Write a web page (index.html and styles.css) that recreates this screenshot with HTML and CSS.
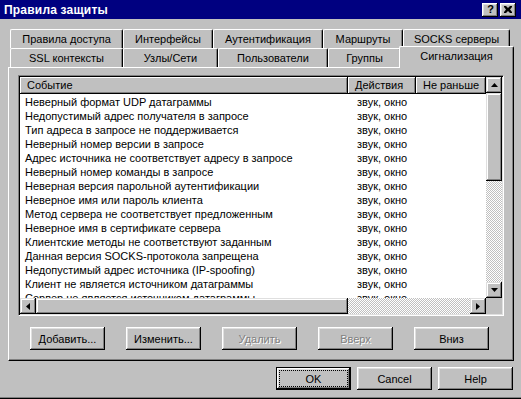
FILE: index.html
```html
<!DOCTYPE html>
<html lang="ru">
<head>
<meta charset="utf-8">
<title>Правила защиты</title>
<link rel="stylesheet" href="styles.css">
</head>
<body>
<div class="window">
  <div class="titlebar">
    <span class="title">Правила защиты</span>
    <div class="tbtns">
      <span class="tbtn help">?</span>
      <span class="tbtn close"><svg width="8" height="7" viewBox="0 0 8 7"><path d="M0 0h2l2 2 2-2h2v1l-2 2.5 2 2.5v1h-2l-2-2-2 2h-2v-1l2-2.5-2-2.5z" fill="#000"/></svg></span>
    </div>
  </div>

  <div class="tabs">
    <div class="tabrow">
      <div class="tab w113">Правила доступа</div>
      <div class="tab w90">Интерфейсы</div>
      <div class="tab w110">Аутентификация</div>
      <div class="tab w80">Маршруты</div>
      <div class="tab w107">SOCKS серверы</div>
    </div>
    <div class="tabrow">
      <div class="tab w113">SSL контексты</div>
      <div class="tab w95">Узлы/Сети</div>
      <div class="tab w110">Пользователи</div>
      <div class="tab w73">Группы</div>
      <div class="tab sel">Сигнализация</div>
    </div>
  </div>

  <div class="panel">
    <div class="list">
      <div class="view">
        <div class="header">
          <div class="hcol c1">Событие</div>
          <div class="hcol c2">Действия</div>
          <div class="hcol c3">Не раньше</div>
        </div>
        <div class="rows">
          <div class="row"><span class="c1">Неверный формат UDP датаграммы</span><span class="c2">звук, окно</span><span class="c3"></span></div>
          <div class="row"><span class="c1">Недопустимый адрес получателя в запросе</span><span class="c2">звук, окно</span><span class="c3"></span></div>
          <div class="row"><span class="c1">Тип адреса в запросе не поддерживается</span><span class="c2">звук, окно</span><span class="c3"></span></div>
          <div class="row"><span class="c1">Неверный номер версии в запросе</span><span class="c2">звук, окно</span><span class="c3"></span></div>
          <div class="row"><span class="c1">Адрес источника не соответствует адресу в запросе</span><span class="c2">звук, окно</span><span class="c3"></span></div>
          <div class="row"><span class="c1">Неверный номер команды в запросе</span><span class="c2">звук, окно</span><span class="c3"></span></div>
          <div class="row"><span class="c1">Неверная версия парольной аутентификации</span><span class="c2">звук, окно</span><span class="c3"></span></div>
          <div class="row"><span class="c1">Неверное имя или пароль клиента</span><span class="c2">звук, окно</span><span class="c3"></span></div>
          <div class="row"><span class="c1">Метод сервера не соответствует предложенным</span><span class="c2">звук, окно</span><span class="c3"></span></div>
          <div class="row"><span class="c1">Неверное имя в сертификате сервера</span><span class="c2">звук, окно</span><span class="c3"></span></div>
          <div class="row"><span class="c1">Клиентские методы не соответствуют заданным</span><span class="c2">звук, окно</span><span class="c3"></span></div>
          <div class="row"><span class="c1">Данная версия SOCKS-протокола запрещена</span><span class="c2">звук, окно</span><span class="c3"></span></div>
          <div class="row"><span class="c1">Недопустимый адрес источника (IP-spoofing)</span><span class="c2">звук, окно</span><span class="c3"></span></div>
          <div class="row"><span class="c1">Клиент не является источником датаграммы</span><span class="c2">звук, окно</span><span class="c3"></span></div>
          <div class="row"><span class="c1">Сервер не является источником датаграммы</span><span class="c2">звук, окно</span><span class="c3"></span></div>
        </div>
      </div>
      <div class="vscroll">
        <div class="sbtn"><svg width="7" height="4" viewBox="0 0 7 4"><path d="M3.5 0L7 4H0z" fill="#000"/></svg></div>
        <div class="vtrack"><div class="vthumb"></div></div>
        <div class="sbtn"><svg width="7" height="4" viewBox="0 0 7 4"><path d="M0 0h7L3.5 4z" fill="#000"/></svg></div>
      </div>
      <div class="hscroll">
        <div class="sbtn"><svg width="4" height="7" viewBox="0 0 4 7"><path d="M0 3.5L4 0v7z" fill="#000"/></svg></div>
        <div class="htrack"><div class="hthumb"></div></div>
        <div class="sbtn"><svg width="4" height="7" viewBox="0 0 4 7"><path d="M0 0l4 3.5L0 7z" fill="#000"/></svg></div>
      </div>
      <div class="corner"></div>
    </div>
    <div class="actions">
      <button class="btn">Добавить...</button>
      <button class="btn">Изменить...</button>
      <button class="btn" disabled>Удалить</button>
      <button class="btn" disabled>Вверх</button>
      <button class="btn">Вниз</button>
    </div>
  </div>

  <div class="footer">
    <button class="btn default"><span class="focus">OK</span></button>
    <button class="btn">Cancel</button>
    <button class="btn">Help</button>
  </div>
</div>
</body>
</html>
```
FILE: styles.css
```css
* { box-sizing: border-box; }
html, body { margin: 0; padding: 0; }
body {
  width: 521px;
  height: 399px;
  overflow: hidden;
  background: #c0c0c0;
  font-family: "Liberation Sans", Arial, sans-serif;
  font-size: 11px;
  color: #000;
}
.window {
  height: 399px;
  display: flex;
  flex-direction: column;
  border-bottom: 1px solid #000;
  box-shadow: inset 0 -1px #808080;
}
.titlebar {
  height: 19px;
  background: #000080;
  display: flex;
  align-items: center;
  padding-left: 4px;
  padding-right: 5px;
  flex: none;
}
.title {
  color: #fff;
  font-weight: bold;
  font-size: 12px;
  letter-spacing: 0.2px;
}
.tbtns { margin-left: auto; display: flex; gap: 2px; }
.tbtn {
  width: 16px;
  height: 14px;
  background: #c0c0c0;
  box-shadow: inset -1px -1px #000, inset 1px 1px #fff, inset -2px -2px #808080, inset 2px 2px #dfdfdf;
  display: flex;
  align-items: center;
  justify-content: center;
  font-weight: bold;
  font-size: 11px;
  line-height: 1;
}
.tbtn.help { padding-left: 1px; }

.tabs { margin-top: 10px; padding-left: 10px; flex: none; }
.tabrow { display: flex; height: 19px; align-items: flex-start; }
.tab {
  height: 19px;
  border-top: 1px solid #fff;
  border-left: 1px solid #fff;
  border-right: 1px solid #000;
  border-radius: 2px 2px 0 0;
  box-shadow: inset -1px 0 #808080;
  background: #c0c0c0;
  text-align: center;
  line-height: 17px;
  padding-top: 1px;
  white-space: nowrap;
}
.w113 { width: 113px; }
.w90 { width: 90px; }
.w110 { width: 110px; }
.w80 { width: 80px; }
.w107 { width: 107px; }
.w95 { width: 95px; }
.w73 { width: 73px; }
.tab.sel {
  width: 115px;
  height: 22px;
  margin-top: -2px;
  margin-left: -2px;
  position: relative;
  z-index: 2;
  padding-top: 0;
  line-height: 19px;
}

.panel {
  flex: none;
  margin-left: 8px;
  width: 506px;
  height: 294px;
  border-top: 1px solid #fff;
  border-left: 1px solid #fff;
  border-right: 1px solid #000;
  border-bottom: 1px solid #000;
  box-shadow: inset -1px -1px #808080;
  padding: 7px 0 0 9px;
}
.list {
  width: 486px;
  height: 241px;
  background: #fff;
  border-top: 1px solid #808080;
  border-left: 1px solid #808080;
  border-right: 1px solid #fff;
  border-bottom: 1px solid #fff;
  box-shadow: inset 1px 1px #000, inset -1px -1px #dfdfdf;
  padding: 1px;
  display: grid;
  grid-template-columns: 1fr 16px;
  grid-template-rows: 1fr 16px;
}
.view { overflow: hidden; }
.header { display: flex; height: 17px; }
.hcol {
  background: #c0c0c0;
  box-shadow: inset -1px -1px #000, inset 1px 1px #fff, inset -2px -2px #808080;
  line-height: 16px;
  padding-left: 7px;
  white-space: nowrap;
}
.header .c1 { width: 328px; }
.header .c2 { width: 68px; }
.header .c3 { width: 70px; }
.rows { padding-top: 1px; }
.row { display: flex; height: 14px; line-height: 14px; white-space: nowrap; }
.row .c1 { width: 328px; padding-left: 5px; }
.row .c2 { width: 68px; padding-left: 9px; }
.row .c3 { width: 70px; }

.checker {
  background: #c0c0c0;
}
.vscroll, .hscroll {
  display: flex;
  background-color: #fff;
  background-image: conic-gradient(#c0c0c0 25%, #fff 0 50%, #c0c0c0 0 75%, #fff 0);
  background-size: 2px 2px;
}
.vscroll { flex-direction: column; }
.sbtn {
  width: 16px;
  height: 16px;
  flex: none;
  background: #c0c0c0;
  box-shadow: inset -1px -1px #000, inset 1px 1px #dfdfdf, inset -2px -2px #808080, inset 2px 2px #fff;
  display: flex;
  align-items: center;
  justify-content: center;
}
.sbtn svg { display: block; }
.vtrack { flex: 1; }
.vthumb {
  height: 88px;
  background: #c0c0c0;
  box-shadow: inset -1px -1px #000, inset 1px 1px #dfdfdf, inset -2px -2px #808080, inset 2px 2px #fff;
}
.htrack { flex: 1; }
.hthumb {
  width: 312px;
  height: 16px;
  background: #c0c0c0;
  box-shadow: inset -1px -1px #000, inset 1px 1px #dfdfdf, inset -2px -2px #808080, inset 2px 2px #fff;
}
.corner { background: #c0c0c0; }

.actions {
  display: flex;
  gap: 21px;
  margin-top: 11px;
  padding-left: 12px;
}
.btn {
  width: 75px;
  height: 23px;
  padding: 0;
  border: none;
  background: #c0c0c0;
  box-shadow: inset -1px -1px #000, inset 1px 1px #fff, inset -2px -2px #808080, inset 2px 2px #dfdfdf;
  font-family: "Liberation Sans", Arial, sans-serif;
  font-size: 11px;
  color: #000;
  display: flex;
  align-items: center;
  justify-content: center;
}
.btn:disabled {
  color: #808080;
  text-shadow: 1px 1px 0 #fff;
}
.footer {
  display: flex;
  justify-content: flex-end;
  gap: 6px;
  margin-top: 6px;
  padding-right: 8px;
}
.btn.default {
  box-shadow: inset 0 0 0 1px #000, inset -2px -2px #000, inset 2px 2px #fff, inset -3px -3px #808080, inset 3px 3px #dfdfdf;
  padding: 4px;
}
.focus {
  flex: 1;
  align-self: stretch;
  display: flex;
  align-items: center;
  justify-content: center;
  outline: 1px dotted #000;
  outline-offset: 0;
}
```
